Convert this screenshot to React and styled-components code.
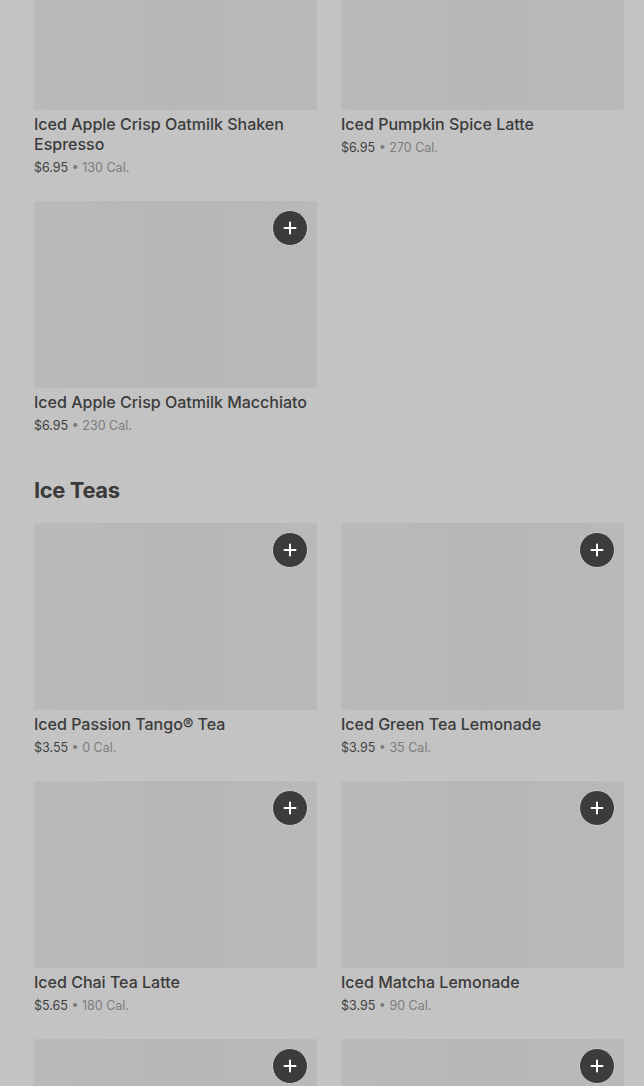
import React from 'react';
import styled, { createGlobalStyle } from 'styled-components';

const GlobalStyle = createGlobalStyle`
    html, body {
        margin: 0;
        padding: 0;
        background: #c3c3c3;
        overflow: hidden;
    }
    body {
        font-family: Inter, "Noto Sans", Arial, sans-serif;
        color: #3a3a3a;
    }
`;

const sections = [
    {
        title: null,
        items: [
            { name: 'Iced Apple Crisp Oatmilk Shaken Espresso', price: '$6.95', cal: '130 Cal.' },
            { name: 'Iced Pumpkin Spice Latte', price: '$6.95', cal: '270 Cal.' },
            { name: 'Iced Apple Crisp Oatmilk Macchiato', price: '$6.95', cal: '230 Cal.' },
        ],
    },
    {
        title: 'Ice Teas',
        items: [
            { name: 'Iced Passion Tango® Tea', price: '$3.55', cal: '0 Cal.' },
            { name: 'Iced Green Tea Lemonade', price: '$3.95', cal: '35 Cal.' },
            { name: 'Iced Chai Tea Latte', price: '$5.65', cal: '180 Cal.' },
            { name: 'Iced Matcha Lemonade', price: '$3.95', cal: '90 Cal.' },
            { name: 'Iced Black Tea', price: '$3.55', cal: '0 Cal.' },
            { name: 'Iced Peach Green Tea', price: '$3.95', cal: '60 Cal.' },
        ],
    },
];

const Page = styled.div`
    padding: 0 20px 40px 34px;
    margin-top: -77px;
`;

const Section = styled.section`
    & + & {
        margin-top: 41px;
    }
`;

const Heading = styled.h2`
    margin: 0 0 19px;
    font-size: 22px;
    line-height: 28px;
    font-weight: 700;
    letter-spacing: -0.4px;
    color: #3a3a3a;
`;

const Grid = styled.div`
    display: grid;
    grid-template-columns: 1fr 1fr;
    column-gap: 24px;
    row-gap: 24px;
    align-items: start;
`;

const Card = styled.div`
    display: flex;
    flex-direction: column;
`;

const Thumb = styled.div`
    position: relative;
    height: 187px;
    border-radius: 2px;
    background: linear-gradient(90deg, #bababa 0%, #b7b7b7 50%, #b9b9b9 100%);
`;

const AddButton = styled.button`
    position: absolute;
    top: 9px;
    right: 9px;
    width: 36px;
    height: 36px;
    box-sizing: border-box;
    border-radius: 50%;
    border: 1px solid #cdcdcd;
    background: #3c3c3c;
    display: flex;
    align-items: center;
    justify-content: center;
    padding: 0;
    cursor: pointer;
`;

const Name = styled.div`
    margin-top: 4px;
    font-size: 16px;
    line-height: 20px;
    font-weight: 500;
    color: #3b3b3b;
`;

const Meta = styled.div`
    margin-top: 4px;
    font-size: 12.5px;
    line-height: 19px;
    color: #7c7c7c;

    b {
        font-weight: 400;
        color: #3f3f3f;
    }
`;

const PlusIcon = () => (
    <svg width="14" height="14" viewBox="0 0 14 14" fill="none">
        <path d="M7 1.5v11M1.5 7h11" stroke="#fff" strokeWidth="2" strokeLinecap="round" />
    </svg>
);

const App = () => (
    <>
        <GlobalStyle />
        <Page>
            {sections.map((section, i) => (
                <Section key={i}>
                    {section.title && <Heading>{section.title}</Heading>}
                    <Grid>
                        {section.items.map((item) => (
                            <Card key={item.name}>
                                <Thumb>
                                    <AddButton aria-label={`Add ${item.name}`}>
                                        <PlusIcon />
                                    </AddButton>
                                </Thumb>
                                <Name>{item.name}</Name>
                                <Meta>
                                    <b>{item.price}</b> • {item.cal}
                                </Meta>
                            </Card>
                        ))}
                    </Grid>
                </Section>
            ))}
        </Page>
    </>
);

export default App;
